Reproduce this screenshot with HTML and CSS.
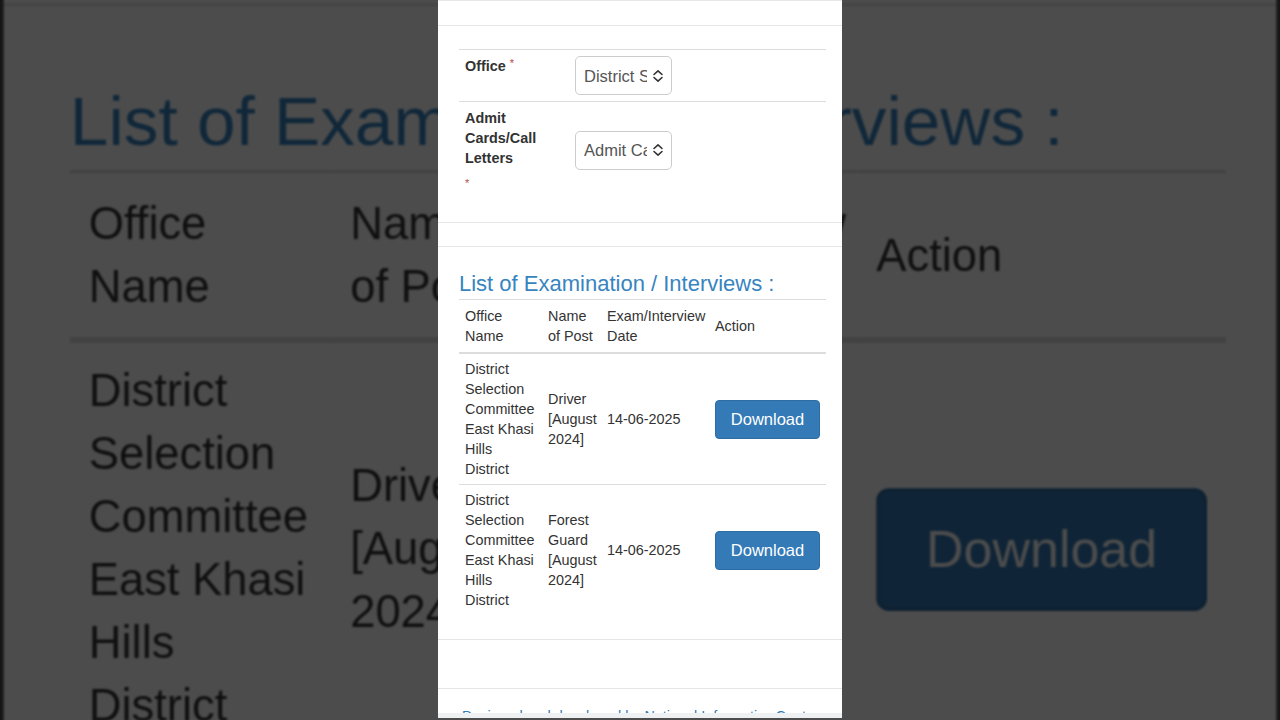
FILE: index.html
```html
<!DOCTYPE html>
<html lang="en">
<head>
	<meta charset="UTF-8">
	<title>Admit Cards</title>
	<link rel="stylesheet" href="styles.css">
</head>
<body>
<div class="backdrop" id="backdrop"></div>
<div class="shade"></div>

<div class="stage">
	<div class="page" id="page">
		<div class="page-body">
			<div class="panel-end"></div>

			<div class="panel panel-form">
				<table class="form-table">
					<tr>
						<td class="form-label">Office <span class="req">*</span></td>
						<td class="form-field">
							<div class="select">
								<span class="select-value">District Selection Committee East Khasi Hills District</span>
								<svg class="select-arrows" width="12" height="14" viewBox="0 0 12 14"><path d="M2 5.5 6 1.8 10 5.5M2 8.5 6 12.2 10 8.5" fill="none" stroke="#333" stroke-width="1.6" stroke-linecap="round" stroke-linejoin="round"/></svg>
							</div>
						</td>
					</tr>
					<tr>
						<td class="form-label">Admit Cards/Call Letters <span class="req req-line">*</span></td>
						<td class="form-field">
							<div class="select">
								<span class="select-value">Admit Cards/Call Letters</span>
								<svg class="select-arrows" width="12" height="14" viewBox="0 0 12 14"><path d="M2 5.5 6 1.8 10 5.5M2 8.5 6 12.2 10 8.5" fill="none" stroke="#333" stroke-width="1.6" stroke-linecap="round" stroke-linejoin="round"/></svg>
							</div>
						</td>
					</tr>
				</table>
			</div>

			<div class="panel panel-list">
				<h4 class="list-title">List of Examination / Interviews :</h4>
				<table class="exam-table">
					<thead>
						<tr>
							<th class="col-office">Office Name</th>
							<th class="col-post">Name of Post</th>
							<th class="col-date">Exam/Interview Date</th>
							<th class="col-action">Action</th>
						</tr>
					</thead>
					<tbody>
						<tr>
							<td>District Selection Committee East Khasi Hills District</td>
							<td>Driver [August 2024]</td>
							<td>14-06-2025</td>
							<td><button class="btn-download">Download</button></td>
						</tr>
						<tr>
							<td>District Selection Committee East Khasi Hills District</td>
							<td>Forest Guard [August 2024]</td>
							<td>14-06-2025</td>
							<td><button class="btn-download">Download</button></td>
						</tr>
					</tbody>
				</table>
			</div>

			<div class="panel panel-footer">
				<p class="footer-text">Designed and developed by National Informatics Centre</p>
			</div>
		</div>
		<div class="page-bar"></div>
	</div>
</div>

<script type="text/javascript">
	// the video frame shows the same page zoomed in behind the phone
	var copy = document.getElementById("page").cloneNode(true);
	copy.removeAttribute("id");
	document.getElementById("backdrop").appendChild(copy);
</script>
</body>
</html>
```

FILE: styles.css
```css
*{margin:0;padding:0;box-sizing:border-box;}
html,body{height:100%;}
body{
	background-color:#4c4c4c;
	overflow:hidden;
	font-family:"Liberation Sans", Helvetica, Arial, sans-serif;
}

/* zoomed copy behind the phone */
.backdrop{
	position:fixed;
	top:0;
	left:0;
	width:100%;
	height:100%;
	display:flex;
	justify-content:center;
	filter:blur(1px);
}
.backdrop .page{
	transform:scale(3.15);
}
.shade{
	position:fixed;
	top:0;
	left:0;
	width:100%;
	height:100%;
	background-color:rgba(0, 0, 0, 0.7);
}

.stage{
	position:relative;
	display:flex;
	justify-content:center;
	height:720px;
}
.page{
	width:404px;
	height:718px;
	background-color:#fff;
	color:#333;
	font-size:14.4px;
	line-height:20px;
	display:flex;
	flex-direction:column;
	overflow:hidden;
}
.page-body{
	flex:1;
	overflow:hidden;
}
.page-bar{
	height:5px;
	background-color:#eef0f2;
}

.panel-end{
	border-bottom:1px solid #e8e8e8;
}
.panel{
	border-top:1px solid #e6e6e6;
	border-bottom:1px solid #e6e6e6;
	padding:0 16px 0 21px;
}
.panel-form{
	margin-top:24px;
	padding-top:23px;
	padding-bottom:24px;
}
.panel-list{
	margin-top:23px;
	padding-top:25px;
	padding-bottom:24px;
}
.panel-footer{
	margin-top:48px;
	padding-top:17px;
	padding-left:24px;
	border-bottom:0;
}

/* form */
.form-table{
	width:100%;
	border-collapse:collapse;
}
.form-table td{
	border-top:1px solid #ddd;
	padding:6px;
}
.form-label{
	width:110px;
	font-weight:bold;
	vertical-align:top;
}
.form-field{
	vertical-align:middle;
}
.req{
	color:#b94a48;
	font-weight:normal;
	font-size:11px;
	vertical-align:top;
	position:relative;
	top:-3px;
}
.req-line{
	display:block;
	top:0;
	padding-top:6px;
	line-height:18px;
}
.select{
	display:flex;
	align-items:center;
	width:97px;
	height:39px;
	border:1px solid #ccc;
	border-radius:5px;
	padding:0 7px 0 8px;
	font-size:16.5px;
	color:#555;
}
.select-value{
	width:63px;
	margin-right:5px;
	white-space:nowrap;
	overflow:hidden;
}

/* list */
.list-title{
	font-size:22px;
	line-height:24px;
	font-weight:normal;
	color:#3784c0;
	margin-bottom:3px;
}
.exam-table{
	width:100%;
	border-collapse:collapse;
	table-layout:fixed;
}
.exam-table th,
.exam-table td{
	text-align:left;
	font-weight:normal;
	vertical-align:middle;
	padding:5px 6px;
	border-top:1px solid #ddd;
}
.exam-table thead th{
	padding:6px;
	border-bottom:2px solid #ddd;
}
.col-office{width:83px;}
.col-post{width:59px;}
.col-date{width:108px;}
.exam-table thead th.col-date{padding-right:0;}
.col-action{width:117px;}
.btn-download{
	width:105px;
	height:39px;
	background-color:#337ab7;
	border:1px solid #2e6da4;
	border-radius:4px;
	color:#fff;
	font-family:inherit;
	font-size:16.5px;
}

.footer-text{
	color:#337ab7;
	white-space:nowrap;
}
```
